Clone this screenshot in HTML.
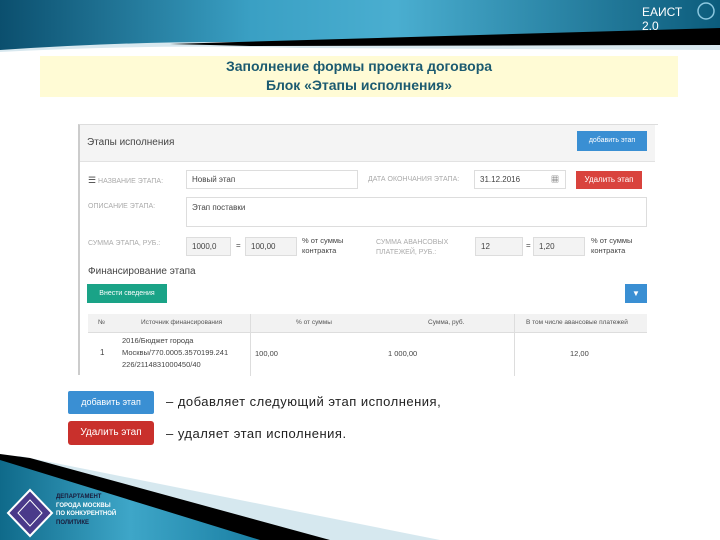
<!DOCTYPE html>
<html><head><meta charset="utf-8"><style>
body{margin:0;width:720px;height:540px;overflow:hidden;background:#fff;font-family:"Liberation Sans","Noto Sans CJK JP",sans-serif;position:relative}
.a{position:absolute}
.inp{position:absolute;border:1px solid #ddd;background:#fff;font-size:8px;color:#444;padding:0 0 0 5px;box-sizing:border-box;line-height:17px}
.lbl{position:absolute;font-size:7px;color:#aaa}
</style></head><body>
<svg class="a" style="left:0;top:0" width="720" height="60">
<defs><linearGradient id="g" x1="0" x2="1"><stop offset="0" stop-color="#0b4f6e"/><stop offset=".35" stop-color="#3aa0c4"/><stop offset=".55" stop-color="#4aaed0"/><stop offset="1" stop-color="#0c5c7c"/></linearGradient></defs>
<path d="M0 0H720V50L300 48Q150 44 0 52Z" fill="#d8e8ef"/>
<path d="M0 0H720V45L220 42Q120 42 0 50Z" fill="url(#g)"/>
<path d="M170 44L720 28V45L250 46Z" fill="#000"/>
<circle cx="706" cy="11" r="8" fill="none" stroke="#8cc8e0" stroke-width="1.5"/>
</svg>
<div class="a" style="left:642px;top:5px;color:#fff;font-size:12px;line-height:14px">ЕАИСТ<br>2.0</div>
<div class="a" style="left:40px;top:56px;width:638px;height:40px;background:#fffbd5;text-align:center;font-weight:bold;color:#1b5a70;font-size:14px;line-height:19px;padding-top:1px">Заполнение формы проекта договора<br>Блок «Этапы исполнения»</div>

<div class="a" style="left:78px;top:124px;width:578px;height:250px;border-left:2px solid #ccc;border-top:1px solid #ddd;background:#fff"></div>
<div class="a" style="left:80px;top:125px;width:575px;height:36px;background:#f4f4f4;border-bottom:1px solid #e2e2e2"></div>
<div class="a" style="left:87px;top:137px;font-size:10px;color:#444">Этапы исполнения</div>
<div class="a" style="left:577px;top:131px;width:70px;height:20px;background:#3a8fd3;color:#fff;font-size:7px;line-height:20px;text-align:center">добавить этап</div>
<div class="lbl" style="left:88px;top:175px"><span style="color:#444;font-size:9px">☰</span> НАЗВАНИЕ ЭТАПА:</div>
<div class="inp" style="left:186px;top:170px;width:172px;height:19px">Новый этап</div>
<div class="lbl" style="left:368px;top:176px">ДАТА ОКОНЧАНИЯ ЭТАПА:</div>
<div class="inp" style="left:474px;top:170px;width:92px;height:19px">31.12.2016<span style="position:absolute;right:6px">▦</span></div>
<div class="a" style="left:576px;top:171px;width:66px;height:18px;background:#d9433d;color:#fff;font-size:8px;line-height:18px;text-align:center">Удалить этап</div>
<div class="lbl" style="left:88px;top:203px">ОПИСАНИЕ ЭТАПА:</div>
<div class="inp" style="left:186px;top:197px;width:461px;height:30px;line-height:20px">Этап поставки</div>
<div class="lbl" style="left:88px;top:240px">СУММА ЭТАПА, РУБ.:</div>
<div class="inp" style="left:186px;top:237px;width:45px;height:19px;background:#f3f3f3">1000,0</div>
<div class="a" style="left:236px;top:241px;font-size:8px;color:#444">=</div>
<div class="inp" style="left:245px;top:237px;width:52px;height:19px;background:#f3f3f3">100,00</div>
<div class="a" style="left:302px;top:236px;font-size:7.5px;color:#444;line-height:10px">% от суммы<br>контракта</div>
<div class="lbl" style="left:376px;top:238px;line-height:10px">СУММА АВАНСОВЫХ<br>ПЛАТЕЖЕЙ, РУБ.:</div>
<div class="inp" style="left:475px;top:237px;width:48px;height:19px;background:#f3f3f3">12</div>
<div class="a" style="left:526px;top:241px;font-size:8px;color:#444">=</div>
<div class="inp" style="left:533px;top:237px;width:52px;height:19px;background:#f3f3f3">1,20</div>
<div class="a" style="left:591px;top:236px;font-size:7.5px;color:#444;line-height:10px">% от суммы<br>контракта</div>
<div class="a" style="left:88px;top:266px;font-size:10px;color:#444">Финансирование этапа</div>
<div class="a" style="left:87px;top:284px;width:80px;height:19px;background:#1aa387;color:#fff;font-size:7px;line-height:19px;text-align:center">Внести сведения</div>
<div class="a" style="left:625px;top:284px;width:22px;height:19px;background:#3a8fd3;color:#fff;font-size:8px;line-height:19px;text-align:center">▼</div>
<div class="a" style="left:88px;top:314px;width:559px;height:18px;background:#f2f2f2;border-bottom:1px solid #ddd;font-size:6.5px;color:#555;line-height:18px">
<span class="a" style="left:10px">№</span><span class="a" style="left:53px">Источник финансирования</span><span class="a" style="left:208px">% от суммы</span><span class="a" style="left:340px">Сумма, руб.</span><span class="a" style="left:438px">В том числе авансовые платежей</span></div>
<div class="a" style="left:250px;top:314px;width:1px;height:62px;background:#ddd"></div>
<div class="a" style="left:514px;top:314px;width:1px;height:62px;background:#ddd"></div>
<div class="a" style="left:100px;top:348px;font-size:8px;color:#444">1</div>
<div class="a" style="left:122px;top:335px;font-size:7.5px;color:#444;line-height:12px">2016/Бюджет города<br>Москвы/770.0005.3570199.241<br>226/2114831000450/40</div>
<div class="a" style="left:255px;top:349px;font-size:7.5px;color:#444">100,00</div>
<div class="a" style="left:388px;top:349px;font-size:7.5px;color:#444">1 000,00</div>
<div class="a" style="left:570px;top:349px;font-size:7.5px;color:#444">12,00</div>

<div class="a" style="left:68px;top:391px;width:86px;height:23px;background:#3a8fd3;border-radius:2px;color:#fff;font-size:9px;line-height:23px;text-align:center">добавить этап</div>
<div class="a" style="left:68px;top:421px;width:86px;height:24px;background:#c9302c;border-radius:3px;color:#fff;font-size:10px;line-height:24px;text-align:center">Удалить этап</div>
<div class="a" style="left:166px;top:394px;font-size:13px;color:#222;letter-spacing:.5px">– добавляет следующий этап исполнения,</div>
<div class="a" style="left:166px;top:426px;font-size:13px;color:#222;letter-spacing:.5px">– удаляет этап исполнения.</div>

<svg class="a" style="left:0;top:440px" width="720" height="100">
<defs><linearGradient id="g2" x1="0" x2="1"><stop offset="0" stop-color="#0f6a8a"/><stop offset=".5" stop-color="#3ea6c8"/><stop offset="1" stop-color="#1a7fa3"/></linearGradient></defs>
<path d="M20 16L440 100H0V20Z" fill="#d6e8ef"/>
<path d="M0 14L30 18L330 100H0Z" fill="#000"/>
<path d="M0 20L260 100H0Z" fill="url(#g2)"/>
<polygon points="30,50 52,73 30,96 8,73" fill="#4a3a8a" stroke="#fff" stroke-width="2"/>
<polygon points="30,60 42,73 30,86 18,73" fill="none" stroke="#fff" stroke-width="1"/>
</svg>
<div class="a" style="left:56px;top:493px;font-size:6px;font-weight:bold;color:#1a1a3a;line-height:8.5px">ДЕПАРТАМЕНТ<br><span style="color:#fff">ГОРОДА МОСКВЫ</span><br><span style="color:#fff">ПО КОНКУРЕНТНОЙ</span><br>ПОЛИТИКЕ</div>
</body></html>
